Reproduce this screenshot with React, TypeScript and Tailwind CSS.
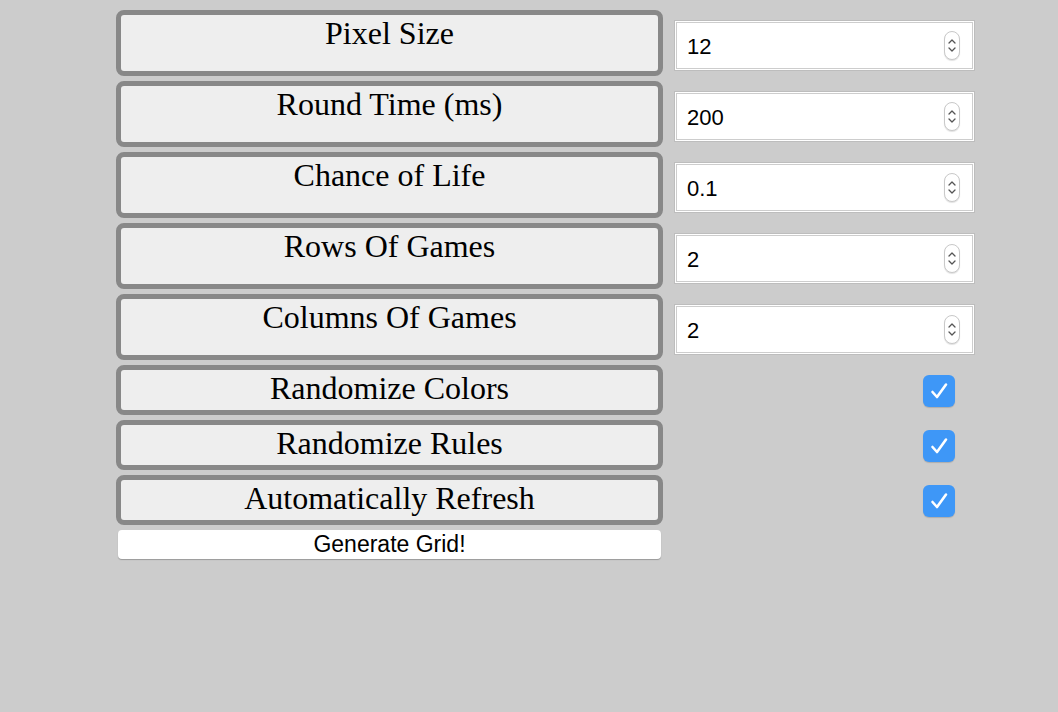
import React from "react";

const numberFields = [
  { label: "Pixel Size", value: "12" },
  { label: "Round Time (ms)", value: "200" },
  { label: "Chance of Life", value: "0.1" },
  { label: "Rows Of Games", value: "2" },
  { label: "Columns Of Games", value: "2" },
];

const toggles = ["Randomize Colors", "Randomize Rules", "Automatically Refresh"];

function Label({ text, tall }: { text: string; tall?: boolean }) {
  return (
    <div
      className={`w-[547px] shrink-0 rounded-lg border-[5px] border-[#888888] bg-[#eeeeee] text-center text-[32px] leading-[36px] text-black ${
        tall ? "h-[66px]" : "h-[50px]"
      }`}
      style={{ fontFamily: '"Liberation Serif", "Times New Roman", serif' }}
    >
      {text}
    </div>
  );
}

function Spinner() {
  return (
    <div className="flex h-[29px] w-[16px] flex-col items-center justify-center gap-[3px] rounded-full border border-[#c9c9c9] bg-white shadow-[0_1px_1px_rgba(0,0,0,0.12)]">
      <svg width="8" height="5" viewBox="0 0 8 5">
        <path d="M1 4 L4 1 L7 4" fill="none" stroke="#555" strokeWidth="1.3" strokeLinecap="round" strokeLinejoin="round" />
      </svg>
      <svg width="8" height="5" viewBox="0 0 8 5">
        <path d="M1 1 L4 4 L7 1" fill="none" stroke="#555" strokeWidth="1.3" strokeLinecap="round" strokeLinejoin="round" />
      </svg>
    </div>
  );
}

function NumberBox({ value }: { value: string }) {
  return (
    <div
      className="mt-[10px] ml-[11px] flex h-[51px] w-[301px] items-center justify-between bg-white pl-[13px] pr-[15px] text-[22px] text-black shadow-[inset_0_0_0_1px_#bdbdbd,inset_0_0_0_2px_#ffffff,inset_0_0_0_3px_#cdcdcd]"
      style={{ fontFamily: '"Liberation Sans", Arial, sans-serif' }}
    >
      <span className="pt-[2px]">{value}</span>
      <Spinner />
    </div>
  );
}

function CheckBox() {
  return (
    <div className="ml-[11px] flex w-[301px] justify-end pr-[20px]">
      <div className="mt-[2px] flex h-[32px] w-[32px] items-center justify-center rounded-[6px] bg-[#3e97f7] shadow-[0_1px_1px_rgba(0,0,0,0.15)]">
        <svg width="32" height="32" viewBox="0 0 32 32">
          <path
            d="M9.5 17 L14 22 L23 9.5"
            fill="none"
            stroke="#ffffff"
            strokeWidth="2.6"
            strokeLinecap="round"
            strokeLinejoin="round"
          />
        </svg>
      </div>
    </div>
  );
}

export default function App() {
  return (
    <div className="min-h-[712px] w-full bg-[#cccccc] pl-[116px] pt-[10px]">
      <div className="flex flex-col gap-[5px]">
        {numberFields.map((f) => (
          <div key={f.label} className="flex items-start">
            <Label text={f.label} tall />
            <NumberBox value={f.value} />
          </div>
        ))}
        {toggles.map((t) => (
          <div key={t} className="flex items-center">
            <Label text={t} />
            <CheckBox />
          </div>
        ))}
        <button
          className="ml-[2px] h-[29px] w-[543px] rounded-[4px] bg-white text-[23px] leading-none text-black shadow-[0_1px_1px_rgba(0,0,0,0.25)]"
          style={{ fontFamily: '"Liberation Sans", Arial, sans-serif' }}
        >
          Generate Grid!
        </button>
      </div>
    </div>
  );
}
